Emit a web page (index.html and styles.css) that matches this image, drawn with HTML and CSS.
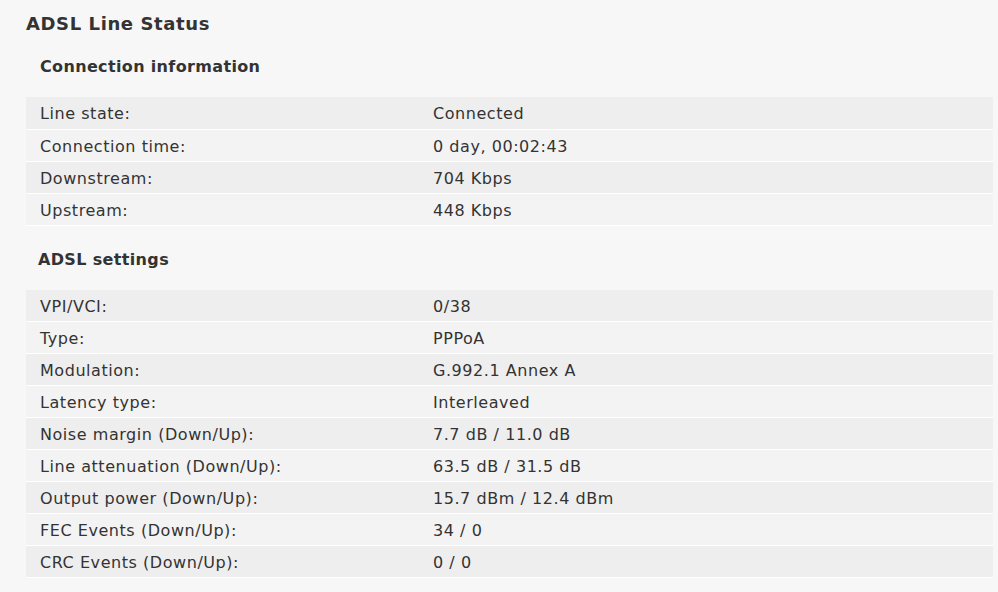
FILE: index.html
```html
<!DOCTYPE html>
<html lang="en">
<head>
<meta charset="UTF-8">
<title>ADSL Line Status</title>
<link rel="stylesheet" href="styles.css">
</head>
<body>

<div class="page">
    <h1>ADSL Line Status</h1>

    <h2>Connection information</h2>
    <table class="status">
        <tr><td>Line state:</td><td>Connected</td></tr>
        <tr><td>Connection time:</td><td>0 day, 00:02:43</td></tr>
        <tr><td>Downstream:</td><td>704 Kbps</td></tr>
        <tr><td>Upstream:</td><td>448 Kbps</td></tr>
    </table>

    <h2 class="second">ADSL settings</h2>
    <table class="status">
        <tr><td>VPI/VCI:</td><td>0/38</td></tr>
        <tr><td>Type:</td><td>PPPoA</td></tr>
        <tr><td>Modulation:</td><td>G.992.1 Annex A</td></tr>
        <tr><td>Latency type:</td><td>Interleaved</td></tr>
        <tr><td>Noise margin (Down/Up):</td><td>7.7 dB / 11.0 dB</td></tr>
        <tr><td>Line attenuation (Down/Up):</td><td>63.5 dB / 31.5 dB</td></tr>
        <tr><td>Output power (Down/Up):</td><td>15.7 dBm / 12.4 dBm</td></tr>
        <tr><td>FEC Events (Down/Up):</td><td>34 / 0</td></tr>
        <tr><td>CRC Events (Down/Up):</td><td>0 / 0</td></tr>
    </table>
</div>

</body>
</html>
```

FILE: styles.css
```css
body {
    font-family: "DejaVu Sans", Verdana, sans-serif;
    background-color: #f7f7f7;
    color: #333;
    margin: 0;
    padding: 0;
}
.page {
    padding: 13px 5px 0 26px;
}
h1 {
    font-size: 18px;
    line-height: 21px;
    letter-spacing: 0.6px;
    margin: 0 0 23px 0;
}
h2 {
    font-size: 16px;
    line-height: 19px;
    letter-spacing: 0.35px;
    margin: 0 0 21px 14px;
}
h2.second {
    margin: 24px 0 21px 12px;
}
table.status {
    width: 100%;
    border-collapse: collapse;
    border-spacing: 0;
}
table.status td {
    height: 32px;
    padding: 2px 0 0 14px;
    font-size: 16px;
    letter-spacing: 0.55px;
    border-bottom: 1px solid #fff;
    box-sizing: border-box;
}
table.status td:first-child {
    width: 393px;
}
table.status tr:nth-child(odd) td {
    background-color: #eeeeee;
}
table.status tr:nth-child(even) td {
    background-color: #f3f3f3;
}
```
